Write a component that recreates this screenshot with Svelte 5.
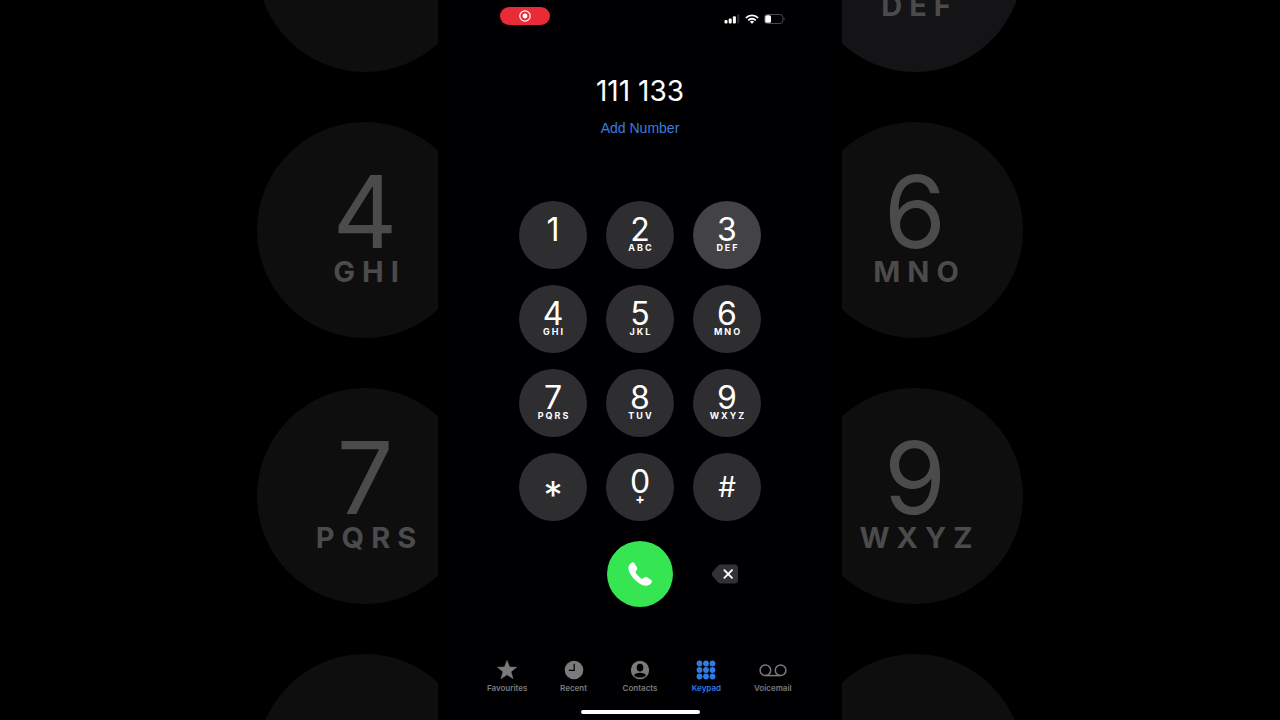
<script>
	const keys = [
		{ digit: '1', letters: '' },
		{ digit: '2', letters: 'ABC' },
		{ digit: '3', letters: 'DEF' },
		{ digit: '4', letters: 'GHI' },
		{ digit: '5', letters: 'JKL' },
		{ digit: '6', letters: 'MNO' },
		{ digit: '7', letters: 'PQRS' },
		{ digit: '8', letters: 'TUV' },
		{ digit: '9', letters: 'WXYZ' },
		{ digit: '*', symbol: 'star' },
		{ digit: '0', letters: '+' },
		{ digit: '#', symbol: 'hash' }
	];

	// enlarged keys that show on both sides of the phone
	const backdrop = [
		{ digit: '', letters: '' },
		{ digit: '', letters: 'DEF', lit: true },
		{ digit: '4', letters: 'GHI' },
		{ digit: '6', letters: 'MNO' },
		{ digit: '7', letters: 'PQRS' },
		{ digit: '9', letters: 'WXYZ' },
		{ digit: '', letters: '' },
		{ digit: '', letters: '' }
	];

	const tabs = ['Favourites', 'Recent', 'Contacts', 'Keypad', 'Voicemail'];

	let number = $state('111133');
	let pressed = $state('3');
	let current = $state('Keypad');

	let display = $derived(number.replace(/(.{3})(?=.)/g, '$1 '));

	function press(digit) {
		pressed = digit;
		number += digit;
	}

	function erase() {
		number = number.slice(0, -1);
	}
</script>

<div class="page">
	<div class="backdrop" aria-hidden="true">
		{#each backdrop as key}
			<div class="big-key" class:lit={key.lit}>
				<span class="big-digit">{key.digit}</span>
				<span class="big-letters">{key.letters}</span>
			</div>
		{/each}
	</div>

	<main class="phone">
		<header class="status">
			<div class="recording">
				<svg width="12" height="12" viewBox="0 0 12 12">
					<circle cx="6" cy="6" r="5.2" fill="none" stroke="#fff" stroke-width="1.2" />
					<circle cx="6" cy="6" r="2.4" fill="#fff" />
				</svg>
			</div>
			<div class="indicators">
				<svg width="16" height="10" viewBox="0 0 16 10" fill="#fff">
					<rect x="0.5" y="6" width="3" height="3.5" rx="1" />
					<rect x="4.7" y="4.5" width="3" height="5" rx="1" />
					<rect x="8.9" y="2.2" width="3" height="7.3" rx="1" />
					<rect x="13.1" y="0.3" width="2.2" height="9.2" rx="1" fill="#2c2c2e" />
				</svg>
				<svg width="14" height="10" viewBox="0 0 14 10" fill="none" stroke="#fff" stroke-width="1.8">
					<path d="M0.9 3.9a8.6 8.6 0 0 1 12.2 0" />
					<path d="M3.2 6.3a5.4 5.4 0 0 1 7.6 0" />
					<path d="M7 9.8L4.9 7.7a3 3 0 0 1 4.2 0Z" fill="#fff" stroke="none" />
				</svg>
				<svg width="21" height="10" viewBox="0 0 21 10">
					<rect x="0.5" y="0.5" width="18.4" height="9" rx="2.8" fill="none" stroke="#4a4a4c" />
					<rect x="1.2" y="1.2" width="5.8" height="7.6" rx="1.5" fill="#fff" />
					<path d="M19.7 3.4a1.8 1.8 0 0 1 0 3.2Z" fill="#4a4a4c" />
				</svg>
			</div>
		</header>

		<output class="number">{display}</output>
		<button class="add">Add Number</button>

		<div class="pad">
			{#each keys as key}
				<button class="key" class:lit={key.digit === pressed} onclick={() => press(key.digit)}>
					{#if key.symbol}
						<span class={key.symbol}>{key.digit}</span>
					{:else}
						<span class="digit">{key.digit}</span>
						<span class="letters" class:plus={key.letters === '+'}>{key.letters}</span>
					{/if}
				</button>
			{/each}
		</div>

		<div class="actions">
			<button class="call" aria-label="Call">
				<svg width="26" height="26" viewBox="0 0 26 26" fill="#fff">
					<path
						d="M5 1.4C3.2 2.2 1.2 4.6 1.4 7.4C1.8 11.2 4.4 15.2 7.6 18.4C10.8 21.6 14.8 24.4 18.6 24.7C21.4 24.9 23.8 23.3 24.7 21.2C25.1 20.2 24.8 19.4 23.9 18.8L20.2 16.3C19.1 15.6 18.2 15.6 17.4 16.3L16.1 17.4C15.5 17.9 14.9 17.9 14.2 17.4C12.2 16 10.2 14 8.8 12C8.3 11.3 8.3 10.7 8.8 10.1L9.7 9C10.4 8.2 10.4 7.3 9.8 6.2L7.4 2.2C6.8 1.2 6 1 5 1.4Z"
					/>
				</svg>
			</button>
			<button class="erase" aria-label="Delete" onclick={erase}>
				<svg width="28" height="20" viewBox="0 0 28 20">
					<path
						d="M9.8 0.5H23.5Q27 0.5 27 4V16Q27 19.5 23.5 19.5H9.8Q8.3 19.5 7.2 18.4L1.3 11.7Q0.3 10 1.3 8.3L7.2 1.6Q8.3 0.5 9.8 0.5Z"
						fill="#323234"
					/>
					<path
						d="M13.4 6.2L21 13.8M21 6.2L13.4 13.8"
						stroke="#fff"
						stroke-width="1.9"
						stroke-linecap="round"
					/>
				</svg>
			</button>
		</div>

		<nav class="tabs">
			{#each tabs as tab}
				<button class="tab" class:active={tab === current} onclick={() => (current = tab)}>
					{#if tab === 'Favourites'}
						<svg width="20" height="20" viewBox="0 0 20 20" fill="currentColor">
							<path
								d="M10 0.4L12.5 7L19.6 7.3L14 11.7L16 18.7L10 14.7L4 18.7L6 11.7L0.4 7.3L7.5 7Z"
								stroke="currentColor"
								stroke-width="0.6"
								stroke-linejoin="round"
							/>
						</svg>
					{:else if tab === 'Recent'}
						<svg width="20" height="20" viewBox="0 0 20 20">
							<circle cx="10" cy="10" r="9.3" fill="currentColor" />
							<path d="M10.2 3.8V10.3H4.8" fill="none" stroke="#000" stroke-width="1.2" />
						</svg>
					{:else if tab === 'Contacts'}
						<svg width="20" height="20" viewBox="0 0 20 20">
							<circle cx="10" cy="10" r="9.2" fill="currentColor" />
							<ellipse cx="10" cy="7.6" rx="3.3" ry="3.9" fill="#000" />
							<path
								d="M3.9 15.2C5.2 13.4 7.4 12.7 10 12.7S14.8 13.4 16.1 15.2C14.6 16.8 12.4 17.6 10 17.6S5.4 16.8 3.9 15.2Z"
								fill="#000"
							/>
						</svg>
					{:else if tab === 'Keypad'}
						<svg width="20" height="20" viewBox="0 0 20 20" fill="currentColor">
							{#each [3.5, 10, 16.5] as cy}
								{#each [3.5, 10, 16.5] as cx}
									<circle {cx} {cy} r="2.9" />
								{/each}
							{/each}
						</svg>
					{:else}
						<svg
							width="28"
							height="20"
							viewBox="0 0 28 20"
							fill="none"
							stroke="currentColor"
							stroke-width="1.5"
						>
							<circle cx="6.4" cy="10.3" r="5.3" />
							<circle cx="21.6" cy="10.3" r="5.3" />
							<path d="M6.4 15.6H21.6" />
						</svg>
					{/if}
					<span>{tab}</span>
				</button>
			{/each}
		</nav>

		<div class="home-bar"></div>
	</main>
</div>

<style>
	:global(body) {
		margin: 0;
		background: #000;
	}

	.page {
		position: relative;
		display: flex;
		justify-content: center;
		min-height: 100vh;
		overflow: hidden;
		font-family: Inter, 'Liberation Sans', sans-serif;
		color: #fff;
	}

	button {
		padding: 0;
		border: none;
		background: none;
		color: inherit;
		font-family: inherit;
		cursor: pointer;
	}

	svg {
		display: block;
	}

	/* sits behind the phone and is cut off by the window */
	.backdrop {
		position: absolute;
		inset: 0;
		display: grid;
		grid-template-columns: 216px 216px;
		grid-auto-rows: 216px;
		gap: 50px 334px;
		justify-content: center;
		align-content: center;
		padding-top: 5px;
	}

	.big-key {
		box-sizing: border-box;
		display: flex;
		flex-direction: column;
		align-items: center;
		padding-top: 40px;
		border-radius: 50%;
		background: #0e0e0e;
		color: #4b4b4b;
	}

	.big-key.lit {
		background: #141416;
	}

	.big-digit {
		height: 100px;
		font-size: 100px;
		line-height: 100px;
	}

	.big-letters {
		margin-right: -9px;
		font-size: 29px;
		font-weight: 700;
		line-height: 20px;
		letter-spacing: 7px;
	}

	.phone {
		position: relative;
		box-sizing: border-box;
		width: 404px;
		display: flex;
		flex-direction: column;
		align-items: center;
		padding: 7px 36px 6px;
		background: #000002;
	}

	.status {
		align-self: stretch;
		display: flex;
		justify-content: space-between;
		padding: 0 21px 0 26px;
	}

	.recording {
		display: flex;
		align-items: center;
		justify-content: center;
		width: 50px;
		height: 18px;
		border-radius: 9px;
		background: #e92b37;
	}

	.indicators {
		display: flex;
		align-items: center;
		gap: 5px;
		padding-top: 6px;
	}

	.number {
		margin-top: 48px;
		font-size: 28px;
		line-height: 36px;
	}

	.add {
		margin-top: 9px;
		color: #3a7de0;
		font-family: 'Liberation Sans', Arial, sans-serif;
		font-size: 14px;
		line-height: 20px;
	}

	.pad {
		display: grid;
		grid-template-columns: repeat(3, 68px);
		grid-auto-rows: 68px;
		gap: 16px 19px;
		margin-top: 63px;
	}

	.key {
		display: flex;
		flex-direction: column;
		align-items: center;
		justify-content: center;
		border-radius: 50%;
		background: #2e2d30;
	}

	.key.lit {
		background: #434245;
	}

	.digit {
		font-size: 32px;
		line-height: 26px;
	}

	.letters {
		height: 10px;
		margin-right: -2px;
		font-size: 9px;
		font-weight: 700;
		line-height: 10px;
		letter-spacing: 2px;
	}

	.letters.plus {
		margin-right: 0;
		font-size: 14px;
		line-height: 8px;
		letter-spacing: 0;
	}

	.star {
		padding-top: 16px;
		font-size: 38px;
		line-height: 36px;
	}

	.hash {
		font-size: 28px;
		line-height: 32px;
	}

	.actions {
		display: grid;
		grid-template-columns: repeat(3, 68px);
		gap: 19px;
		align-items: center;
		justify-items: center;
		margin-top: 20px;
	}

	.call {
		grid-column: 2;
		display: flex;
		align-items: center;
		justify-content: center;
		width: 66px;
		height: 66px;
		border-radius: 50%;
		background: #35e552;
	}

	.erase {
		padding-right: 4px;
	}

	.tabs {
		align-self: stretch;
		display: grid;
		grid-template-columns: repeat(5, 1fr);
		margin-top: auto;
	}

	.tab {
		display: flex;
		flex-direction: column;
		align-items: center;
		gap: 3px;
		color: #7b7b7c;
		font-size: 8px;
		font-weight: 600;
		line-height: 10px;
	}

	.tab.active {
		color: #2f7ae5;
	}

	.home-bar {
		width: 119px;
		height: 4px;
		margin-top: 17px;
		border-radius: 2px;
		background: #fff;
	}
</style>
